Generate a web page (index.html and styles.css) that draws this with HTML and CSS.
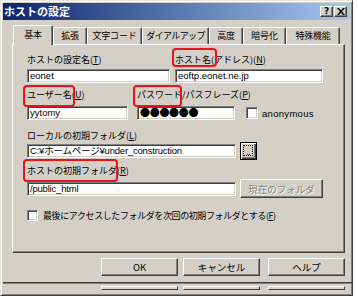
FILE: index.html
```html
<!DOCTYPE html>
<html lang="ja">
<head>
<meta charset="utf-8">
<title>ホストの設定</title>
<link rel="stylesheet" href="styles.css">
</head>
<body>
<div class="win">
  <div class="titlebar">
    <span class="title">ホストの設定</span>
    <div class="tbtns">
      <span class="tbtn q">?</span>
      <span class="tbtn"><svg width="8" height="7" viewBox="0 0 8 7"><path d="M0 0h2l2 2.4L6 0h2L5 3.5 8 7H6L4 4.6 2 7H0l3-3.5z" fill="#000"/></svg></span>
    </div>
  </div>
  <div class="tabs">
    <span class="tab sel t1">基本</span>
    <span class="tab t2">拡張</span>
    <span class="tab t3">文字コード</span>
    <span class="tab t4">ダイアルアップ</span>
    <span class="tab t5">高度</span>
    <span class="tab t6">暗号化</span>
    <span class="tab t7">特殊機能</span>
  </div>
  <div class="panel">
    <div class="grid g1">
      <div class="lbl">ホストの設定名(<u>T</u>)</div>
      <div class="lbl"><span class="mark m-host">ホスト名</span>(アドレス)(<u>N</u>)</div>
      <div class="inp">eonet</div>
      <div class="inp">eoftp.eonet.ne.jp</div>
    </div>
    <div class="grid g2">
      <div class="lbl"><span class="mark m-user">ユーザー名</span>(<u>U</u>)</div>
      <div class="lbl"><span class="mark m-pass">パスワード</span>/パスフレーズ(<u>P</u>)</div>
      <div></div>
      <div class="inp">yytomy</div>
      <div class="inp pw">●●●●●●</div>
      <label class="chk"><span class="cb"></span><span class="latin">anonymous</span></label>
    </div>
    <div class="lbl l3">ローカルの初期フォルダ(<u>L</u>)</div>
    <div class="line">
      <div class="inp wide">C:¥ホームページ¥under_construction</div>
      <span class="btn browse"><span class="focus">..</span></span>
    </div>
    <div class="lbl l4"><span class="mark m-init">ホストの初期フォルダ</span>(<u>R</u>)</div>
    <div class="line">
      <div class="inp wide">/public_html</div>
      <span class="btn cur">現在のフォルダ</span>
    </div>
    <label class="chk last"><span class="cb"></span><span class="tight">最後にアクセスしたフォルダを次回の初期フォルダとする(<u>F</u>)</span></label>
  </div>
  <div class="actions">
    <span class="btn act">OK</span>
    <span class="btn act">キャンセル</span>
    <span class="btn act help">ヘルプ</span>
  </div>
  <div class="sep"></div>
  <div class="ghosts">
    <span class="ghost g-ok"></span>
    <span class="ghost g-cancel"></span>
    <span class="ghost g-help"></span>
  </div>
</div>
</body>
</html>
```
FILE: styles.css
```css
* { box-sizing: border-box; }
body {
  margin: 0;
  background: #fff;
  font-family: "Noto Sans CJK JP", sans-serif;
  font-size: 9px;
  color: #000;
}
.win {
  width: 353px;
  height: 296px;
  background: #d4d0c8;
  border: 1px solid;
  border-color: #e8e6e0 #404040 #404040 #e8e6e0;
  box-shadow: inset 1px 1px #fff, inset -1px -1px #808080;
  padding: 2px;
  display: flex;
  flex-direction: column;
}
.titlebar {
  height: 17px;
  flex: none;
  background: linear-gradient(to right, #0a246a, #a6caf0);
  display: flex;
  align-items: center;
  justify-content: space-between;
  padding: 0 3px 0 1px;
}
.title {
  color: #fff;
  font-weight: bold;
  font-size: 11px;
  line-height: 17px;
}
.tbtns { display: flex; gap: 1px; }
.tbtn {
  width: 13px;
  height: 11px;
  background: #d4d0c8;
  border: 1px solid;
  border-color: #fff #404040 #404040 #fff;
  box-shadow: inset -1px -1px #808080;
  display: flex;
  align-items: center;
  justify-content: center;
}
.tbtn.q { font: bold 9px/9px "DejaVu Sans", sans-serif; }

.tabs {
  display: flex;
  align-items: flex-end;
  height: 19px;
  margin-top: 5px;
  margin-left: 10px;
  position: relative;
  z-index: 1;
  flex: none;
}
.tab {
  height: 17px;
  background: #d4d0c8;
  border-top: 1px solid #fff;
  border-left: 1px solid #fff;
  border-right: 1px solid #404040;
  box-shadow: inset -1px 0 #808080;
  border-radius: 2px 2px 0 0;
  text-align: center;
  line-height: 15px;
  font-size: 9px;
  white-space: nowrap;
  letter-spacing: -0.2px;
}
.tab.sel { height: 20px; margin-bottom: -1px; line-height: 17px; }
.t1 { width: 40px; }
.t2 { width: 34px; }
.t3 { width: 55px; }
.t4 { width: 67px; letter-spacing: -0.6px; }
.t5 { width: 34px; }
.t6 { width: 43px; }
.t7 { width: 54px; }

.panel {
  flex: none;
  margin-left: 9px;
  width: 333px;
  height: 209px;
  border: 1px solid;
  border-color: #fff #404040 #404040 #fff;
  box-shadow: inset -1px -1px #808080;
  padding: 9px 0 0 14px;
}
.lbl { line-height: 12px; white-space: nowrap; }
.lbl u, .chk u { text-decoration: underline; }
.mark { position: relative; }
.mark::after {
  content: "";
  position: absolute;
  border: 2px solid #e8141c;
  border-radius: 4px;
}
.m-host::after { top: -5px; bottom: -1px; left: -3px; right: -6px; }
.m-user::after { top: -3px; bottom: -6px; left: -4px; right: -3px; }
.m-pass::after { top: -3px; bottom: -6px; left: -4px; right: 0; }
.m-init::after { top: -5px; bottom: -5px; left: -4px; right: -1px; }

.grid { display: grid; align-items: end; }
.g1 { grid-template-columns: 143px 148px; column-gap: 5px; row-gap: 3px; }
.g2 { grid-template-columns: 101px 98px auto; column-gap: 9px; row-gap: 5px; margin-top: 6px; }

.inp {
  height: 14px;
  background: #fff;
  border: 1px solid;
  border-color: #808080 #fff #fff #808080;
  box-shadow: inset 1px 1px #404040, inset -1px -1px #d4d0c8;
  padding: 0 2px;
  font-family: "Liberation Sans", "Noto Sans CJK JP", sans-serif;
  font-size: 9.5px;
  line-height: 11px;
  white-space: nowrap;
  overflow: hidden;
}
.inp.pw {
  font-family: "Noto Sans CJK JP", sans-serif;
  font-size: 10px;
  letter-spacing: -0.3px;
}
.inp.wide { width: 209px; letter-spacing: -0.2px; }

.chk { display: flex; align-items: center; gap: 5px; white-space: nowrap; }
.g2 .chk { margin-left: 2px; margin-bottom: 1px; gap: 4px; }
.latin { font-family: "Liberation Sans", sans-serif; font-size: 9.5px; letter-spacing: 0.3px; }
.cb {
  width: 12px;
  height: 12px;
  flex: none;
  background: #fff;
  border: 1px solid;
  border-color: #808080 #fff #fff #808080;
  box-shadow: inset 1px 1px #404040, inset -1px -1px #d4d0c8;
}
.tight { letter-spacing: -0.4px; }

.l3 { margin-top: 10px; }
.l4 { margin-top: 5px; margin-bottom: 2px; }
.line { display: flex; align-items: center; gap: 4px; }

.btn {
  display: flex;
  align-items: center;
  justify-content: center;
  background: #d4d0c8;
  border: 1px solid;
  border-color: #fff #404040 #404040 #fff;
  box-shadow: inset -1px -1px #808080;
  white-space: nowrap;
}
.browse {
  width: 17px;
  height: 18px;
  border-color: #000;
  box-shadow: inset 1px 1px #fff, inset -1px -1px #404040, inset -2px -2px #808080;
  padding: 2px 3px 3px 2px;
}
.browse .focus {
  width: 100%;
  height: 100%;
  border: 1px dotted #000;
  display: flex;
  align-items: flex-end;
  justify-content: center;
  font-size: 8px;
  line-height: 7px;
  letter-spacing: -0.5px;
}
.cur {
  width: 83px;
  height: 19px;
  color: #808080;
  text-shadow: 1px 1px #fff;
  font-size: 9.5px;
}
.chk.last { margin-top: 11px; }
.chk.last .cb { width: 11px; height: 11px; }

.actions {
  flex: none;
  display: flex;
  margin-top: 5px;
  padding-left: 98px;
  gap: 5px;
}
.act { width: 77px; height: 18px; font-size: 9.5px; }
.act.help { margin-left: 3px; }
.sep {
  flex: none;
  margin: 6px -2px 0 0;
  height: 2px;
  border-top: 1px solid #404040;
  border-bottom: 1px solid #808080;
}
.ghosts {
  flex: none;
  display: flex;
  gap: 5px;
  padding-left: 98px;
  margin-top: 2px;
}
.ghost {
  width: 77px;
  height: 4px;
  border-top: 1px solid #fff;
  border-bottom: 1px solid #404040;
  border-left: 1px solid #fff;
  border-right: 1px solid #404040;
}
.g-help { margin-left: 3px; }
```
